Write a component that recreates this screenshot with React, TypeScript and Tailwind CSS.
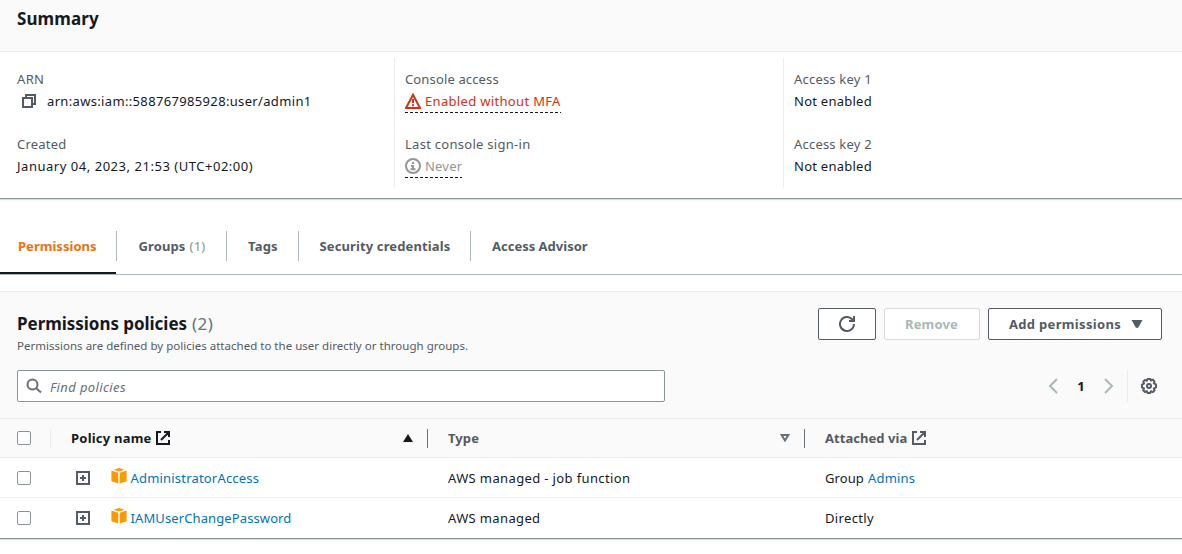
import React from "react";

function CopyIcon() {
  return (
    <svg width="16" height="16" viewBox="0 0 16 16" fill="none" stroke="#545b64" strokeWidth="2">
      <path d="M2 5h9v9H2z" />
      <path d="M5 5V2h9v9h-3" />
    </svg>
  );
}

function WarningIcon() {
  return (
    <svg width="16" height="16" viewBox="0 0 16 16" fill="none" stroke="#d13212" strokeWidth="2">
      <path d="M8 1.7 15 15H1z" />
      <path d="M8 6v4M8 11.3v2" />
    </svg>
  );
}

function InfoIcon() {
  return (
    <svg width="16" height="16" viewBox="0 0 16 16" fill="none" stroke="#959595" strokeWidth="2">
      <circle cx="8" cy="8" r="7" />
      <path d="M8 4v2M6 8h2v3M5.5 11.2h5" />
    </svg>
  );
}

function RefreshIcon() {
  return (
    <svg width="16" height="16" viewBox="0 0 16 16" fill="none" stroke="#545b64" strokeWidth="2">
      <path d="M15 8a7 7 0 1 1-2.2-5.1L14.6 5" />
      <path d="M15 0v5h-5" />
    </svg>
  );
}

function SearchIcon() {
  return (
    <svg width="16" height="16" viewBox="0 0 16 16" fill="none" stroke="#687078" strokeWidth="2">
      <circle cx="6.5" cy="6.5" r="5" />
      <path d="m10.2 10.2 4.8 4.3" />
    </svg>
  );
}

function Chevron({ right = false }: { right?: boolean }) {
  return (
    <svg width="16" height="16" viewBox="0 0 16 16" fill="none" stroke="#aab7b8" strokeWidth="2">
      <path d={right ? "m4 1 7 7-7 7" : "m12 1-7 7 7 7"} />
    </svg>
  );
}

function GearIcon() {
  return (
    <svg width="16" height="16" viewBox="0 0 16 16" fill="none" stroke="#545b64" strokeWidth="2" strokeLinejoin="round">
      <path d="M6.6 1h2.8l.5 1.5 2-.7 1.6 1.6-.7 2 2.2 1v3l-2.2 1 .8 2-1.7 1.7-2-.8-.6 1.7H6.6L6 13.2l-2 .8-1.8-1.7.8-2L1 9.4V6.6l2-1-.7-2 1.6-1.7 2 .8z" />
      <circle cx="8" cy="8" r="2" />
    </svg>
  );
}

function ExternalIcon({ dark = false }: { dark?: boolean }) {
  return (
    <svg width="16" height="16" viewBox="0 0 16 16" fill="none" stroke={dark ? "#16191f" : "#545b64"} strokeWidth="2">
      <path d="M6 2H2v12h12v-4M9 2h5v5M14 2 6 10" />
    </svg>
  );
}

function PlusBox() {
  return (
    <svg width="14" height="14" viewBox="0 0 14 14" fill="none" stroke="#545b64" strokeWidth="2">
      <path d="M1 1h12v12H1zM7 4v6M4 7h6" />
    </svg>
  );
}

function PolicyCube() {
  return (
    <svg width="16" height="16" viewBox="0 0 16 16" fill="#ff9900">
      <path d="M8 0 13.5 1.7 8 3.5 2.5 1.7z" />
      <path d="M.4 2.6 7.2 4.7v10.8L.4 13.2zM15.6 2.6 8.8 4.7v10.8l6.8-2.3z" />
    </svg>
  );
}

function Checkbox() {
  return <span className="block size-[14px] shrink-0 rounded-[2px] border border-[#879596] bg-white" />;
}

function Dashed({ children }: { children: React.ReactNode }) {
  return <div className="flex h-[22px] w-max items-center gap-1">{children}</div>;
}

function DashLine({ width }: { width: number }) {
  return (
    <svg className="block" width={width} height="1">
      <path d={`M0 .5H${width}`} stroke="#16191f" strokeDasharray="3 2" />
    </svg>
  );
}

const label = "h-[22px] text-[#545b64]";

function Summary() {
  return (
    <section className="border-b border-[#879596] shadow-[0_1px_1px_0_rgba(0,28,36,0.15)]">
      <header className="h-[52px] border-b border-[#eaeded] bg-[#fafafa] pl-[17px] pt-[8px]">
        <h2 className="text-[17px] font-bold leading-[22px] tracking-[0.1px]">Summary</h2>
      </header>
      <div className="flex h-[146px] pt-[6px] leading-[22px]">
        <div className="h-[130px] w-[395px] border-r border-[#eaeded] pl-[17px] pt-[10px]">
          <div className={`${label} tracking-[0.35px]`}>ARN</div>
          <div className="mb-[21px] flex h-[22px] items-center gap-[10px] pl-1">
            <CopyIcon />
            <span className="tracking-[0.34px]">arn:aws:iam::588767985928:user/admin1</span>
          </div>
          <div className={`${label} tracking-[0.2px]`}>Created</div>
          <div className="tracking-[0.53px]">January 04, 2023, 21:53 (UTC+02:00)</div>
        </div>
        <div className="h-[130px] w-[389px] border-r border-[#eaeded] pl-[10px] pt-[10px]">
          <div className={`${label} tracking-[0.14px]`}>Console access</div>
          <div className="mb-[20px] h-[23px] text-[#d13212]">
            <Dashed><WarningIcon /><span className="tracking-[0.33px]">Enabled without MFA</span></Dashed>
            <DashLine width={156} />
          </div>
          <div className={`${label} tracking-[0.28px]`}>Last console sign-in</div>
          <div className="h-[23px] text-[#959595]">
            <Dashed><InfoIcon /><span className="tracking-[0.2px]">Never</span></Dashed>
            <DashLine width={57} />
          </div>
        </div>
        <div className="pl-[10px] pt-[10px]">
          <div className={`${label} tracking-[0.2px]`}>Access key 1</div>
          <div className="mb-[21px] tracking-[0.25px]">Not enabled</div>
          <div className={`${label} tracking-[0.2px]`}>Access key 2</div>
          <div className="tracking-[0.25px]">Not enabled</div>
        </div>
      </div>
    </section>
  );
}

const tabBase = "flex h-[30px] items-center border-r border-[#aab7b8]";

function Tabs() {
  return (
    <nav className="mt-[17px] flex h-[59px] border-b border-[#aab7b8] font-bold text-[#545b64]">
      <div className="flex h-[58px] w-[116px] items-center border-b-2 border-[#16191f] pl-[18px] pt-[4px] tracking-[0.03px] text-[#ec7211]">
        Permissions
      </div>
      <div className="mt-[15px] flex h-[30px]">
        <div className={`${tabBase} w-[111px] gap-[4px] border-l pl-[21.6px]`}>
          <span className="tracking-[0.1px]">Groups</span>
          <span className="font-normal tracking-[0.25px] text-[#879596]">(1)</span>
        </div>
        <div className={`${tabBase} w-[72px] pl-[21px] tracking-[0.2px]`}>Tags</div>
        <div className={`${tabBase} w-[172px] pl-[20.5px] tracking-[0.12px]`}>Security credentials</div>
        <div className="flex items-center pl-[21px]">Access Advisor</div>
      </div>
    </nav>
  );
}

function PanelHeader() {
  return (
    <header className="h-[126px] bg-[#fafafa] pl-[17px] pr-[20px] pt-4">
      <div className="flex h-[62px] justify-between">
        <div>
          <h2 className="flex h-8 items-center gap-[5px] text-[17px]">
            <span className="font-bold tracking-[-0.04px]">Permissions policies</span>
            <span className="tracking-[0.5px] text-[#687078]">(2)</span>
          </h2>
          <p className="-mt-[2px] text-[11.5px] leading-4 tracking-[0.015px] text-[#545b64]">
            Permissions are defined by policies attached to the user directly or through groups.
          </p>
        </div>
        <div className="flex gap-2 font-bold text-[#545b64]">
          <button className="flex h-8 w-[58px] items-center justify-center rounded-[2px] border border-[#545b64] bg-white">
            <RefreshIcon />
          </button>
          <button className="h-8 w-24 rounded-[2px] border border-[#d5dbdb] bg-white pr-px tracking-[0.17px] text-[#aab7b8]">Remove</button>
          <button className="flex h-8 w-[174px] items-center rounded-[2px] border border-[#545b64] bg-white pl-5">
            <span className="tracking-[0.32px]">Add permissions</span>
            <svg className="ml-[10px]" width="12" height="8" viewBox="0 0 12 8" fill="#545b64"><path d="M.5 0h11L7.4 7.2Q6 8.8 4.6 7.2z" /></svg>
          </button>
        </div>
      </div>
      <div className="flex h-8 items-center justify-between">
        <div className="flex h-8 w-[648px] items-center gap-2 rounded-[2px] border border-[#879596] bg-white pl-2">
          <SearchIcon />
          <span className="pt-[2px] italic tracking-[0.39px] text-[#687078]">Find policies</span>
        </div>
        <div className="flex h-8 items-center pr-[5px]">
          <Chevron />
          <span className="ml-4 mr-4 w-2 text-center font-bold">1</span>
          <Chevron right />
          <span className="ml-[10px] mr-[13px] h-8 w-px bg-[#eaeded]" />
          <GearIcon />
        </div>
      </div>
    </header>
  );
}

function TableHead() {
  return (
    <div className="flex h-10 items-center border-y border-[#eaeded] bg-[#fafafa] pl-[17px] font-bold text-[#545b64]">
      <Checkbox />
      <div className="ml-[19px] flex h-[19px] w-[378px] items-center border-l border-r border-l-[#eaeded] border-r-[#687078] pl-5 text-[#16191f]">
        <span className="mr-[3px] w-[81px] tracking-[0.22px]">Policy name</span>
        <ExternalIcon dark />
        <svg className="ml-auto mr-[14px]" width="10" height="8" viewBox="0 0 10 8" fill="#16191f"><path d="M5 0 10 8H0z" /></svg>
      </div>
      <div className="flex h-[19px] w-[377px] items-center border-r border-[#687078] pl-5">
        <span className="tracking-[0.1px]">Type</span>
        <svg className="ml-auto mr-[14px]" width="10" height="8" viewBox="0 0 10 8" fill="none" stroke="#687078" strokeWidth="2"><path d="M1.6 1h6.8L5 6.5z" /></svg>
      </div>
      <div className="flex items-center pl-5">
        <span className="mr-[3px] w-[83px] tracking-[0.05px]">Attached via</span>
        <ExternalIcon />
      </div>
    </div>
  );
}

function Row({ name, type, children, last = false }: { name: React.ReactNode; type: React.ReactNode; children: React.ReactNode; last?: boolean }) {
  return (
    <div className={`flex items-center bg-white pl-[17px] ${last ? "h-10" : "h-10 border-b border-[#eaeded]"}`}>
      <Checkbox />
      <div className="ml-[45px] flex w-[372px] items-center">
        <PlusBox />
        <span className="-mt-1 ml-[20.5px] mr-1"><PolicyCube /></span>
        <a className="text-[#0073bb]">{name}</a>
      </div>
      <div className="w-[377px]">{type}</div>
      <div className="flex gap-[4px]">{children}</div>
    </div>
  );
}

export default function App() {
  return (
    <main className="h-[554px] overflow-hidden bg-white font-['Noto_Sans',sans-serif] text-[13px] leading-5 text-[#16191f]">
      <Summary />
      <Tabs />
      <section className="mt-4 border-b border-t border-b-[#879596] border-t-[#eaeded] shadow-[0_1px_1px_0_rgba(0,28,36,0.15)]">
        <PanelHeader />
        <TableHead />
        <Row name={<span className="tracking-[0.19px]">AdministratorAccess</span>} type={<span className="tracking-[0.37px]">AWS managed - job function</span>}>
          <span className="tracking-[0.1px]">Group</span>
          <a className="tracking-[0.2px] text-[#0073bb]">Admins</a>
        </Row>
        <Row last name={<span className="tracking-[0.11px]">IAMUserChangePassword</span>} type={<span className="tracking-[0.36px]">AWS managed</span>}>
          <span className="tracking-[0.35px]">Directly</span>
        </Row>
      </section>
    </main>
  );
}
